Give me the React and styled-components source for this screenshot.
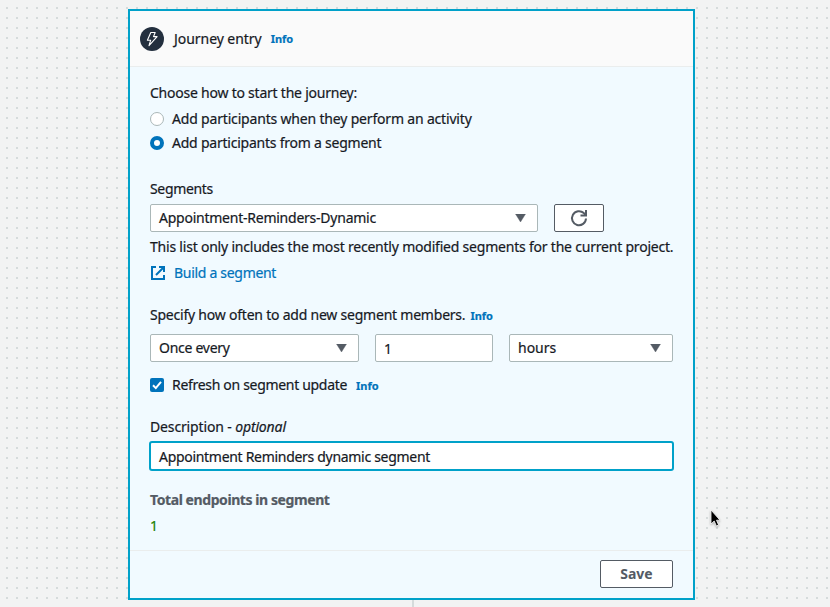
import React from "react";
import styled, { createGlobalStyle, css } from "styled-components";

const GlobalStyle = createGlobalStyle`
  :root {
    --text: #16191f;
    --sub: #545b64;
    --link: #0073bb;
    --accent: #00a1c9;
    --line: #aab7b8;
  }

  * {
    box-sizing: border-box;
  }

  body {
    margin: 0;
    overflow: hidden;
    background: #f2f3f3;
    color: var(--text);
    font-family: "Noto Sans", "Open Sans", sans-serif;
    font-size: 14px;
    line-height: 20px;
  }
`;

const Canvas = styled.div`
  position: relative;
  width: 830px;
  height: 607px;
  padding: 9px 0 0 128px;
`;

const Dots = styled.svg`
  position: absolute;
  inset: 0;
  width: 830px;
  height: 607px;
`;

const Card = styled.section`
  position: relative;
  display: flex;
  flex-direction: column;
  width: 567px;
  height: 591px;
  border: 2px solid var(--accent);
  background: #f1faff;
`;

const Connector = styled.div`
  position: relative;
  width: 2px;
  height: 7px;
  margin-left: 284px;
  background: #d5dbdb;
`;

const Header = styled.header`
  display: flex;
  align-items: center;
  height: 56px;
  padding: 0 10px;
  border-bottom: 1px solid #eaeded;
  background: #fafafa;

  svg {
    margin-right: 10px;
  }
`;

const Body = styled.div`
  flex: 1;
  padding: 16px 20px 0;
`;

const Footer = styled.footer`
  display: flex;
  justify-content: flex-end;
  height: 48px;
  padding: 9px 20px 0;
  border-top: 1px solid #eaeded;
`;

const Text = styled.span`
  white-space: nowrap;
  letter-spacing: ${({ $track }) => $track || 0}px;
  -webkit-text-stroke: 0.2px currentColor;
`;

const Line = styled.div`
  display: flex;
  align-items: center;
  height: 20px;
  margin-top: ${({ $top }) => $top || 0}px;
`;

const Info = styled.a`
  margin-left: ${({ $gap }) => $gap}px;
  padding-top: ${({ $drop }) => $drop || 0}px;
  color: var(--link);
  font-size: 11px;
  font-weight: 700;
  -webkit-text-stroke: 0.2px currentColor;
`;

const Radio = styled.span`
  width: 14px;
  height: 14px;
  margin-right: 8px;
  border: 1px solid var(--line);
  border-radius: 50%;
  background: #fff;

  ${({ $checked }) =>
    $checked &&
    css`
      border: 4px solid var(--link);
    `}
`;

const Checkbox = styled.span`
  display: flex;
  width: 14px;
  height: 14px;
  margin-right: 8px;
  border-radius: 2px;
  background: var(--link);
`;

const Fields = styled.div`
  display: flex;
  gap: 16px;
  margin-top: ${({ $top }) => $top}px;
`;

const Field = styled.div`
  display: flex;
  align-items: center;
  justify-content: space-between;
  width: ${({ $width }) => $width}px;
  height: 28px;
  padding: ${({ $drop }) => $drop || 0}px 11px 0 8px;
  border: 1px solid var(--line);
  border-radius: 2px;
  background: #fff;
`;

const FocusedField = styled(Field)`
  height: 30px;
  margin: 4px -1px 0;
  border: 2px solid var(--accent);
  border-radius: 3px;
`;

const Button = styled.button`
  display: flex;
  align-items: center;
  justify-content: center;
  width: ${({ $width }) => $width}px;
  height: 28px;
  padding: 0;
  border: 1px solid var(--sub);
  border-radius: 2px;
  background: #fff;
  color: var(--sub);
  font: inherit;
  font-weight: 700;
`;

const BuildLink = styled.a`
  display: flex;
  align-items: center;
  color: var(--link);

  svg {
    margin-right: 8px;
  }
`;

const Total = styled.div`
  margin-top: 19px;
  color: var(--sub);
  font-weight: 700;
`;

const Count = styled.div`
  margin-top: 6px;
  color: #1d8102;
`;

const Cursor = styled.svg`
  position: absolute;
  left: 708px;
  top: 508px;
  filter: drop-shadow(0 1px 1px rgba(0, 0, 0, 0.3));
`;

const BoltIcon = () => (
  <svg width="24" height="24" viewBox="0 0 24 24">
    <circle cx="12" cy="12" r="12" fill="#232f3e" />
    <path
      d="M10.8 5.5h4.4l-1.7 4.1h3.6L9 18.6l1.7-5.4H7.4z"
      fill="none"
      stroke="#fff"
      strokeWidth="1.1"
      strokeLinejoin="round"
    />
  </svg>
);

const Caret = () => (
  <svg width="11" height="8" viewBox="0 0 11 8">
    <path d="M.5 0h10L5.5 8z" fill="#545b64" stroke="#545b64" strokeWidth=".4" />
  </svg>
);

const RefreshIcon = () => (
  <svg width="18" height="18" viewBox="0 0 18 18" fill="none" stroke="#545b64" strokeWidth="2">
    <path d="M16 9.5a7 7 0 1 1-2.2-5.4L15.6 6" />
    <path d="M16 1v5.5h-5.5" />
  </svg>
);

const ExternalIcon = () => (
  <svg width="16" height="16" viewBox="0 0 16 16" fill="none" stroke="#0073bb" strokeWidth="2">
    <path d="M6 2H2v12h12v-4" />
    <path d="M9 2h5v5M14 2L6 10" />
  </svg>
);

const App = () => {
  return (
    <>
      <GlobalStyle />
      <Canvas>
        <Dots>
          <defs>
            <pattern id="dots" x="6" y="7" width="10" height="10" patternUnits="userSpaceOnUse">
              <rect width="2" height="2" fill="#d5dbdb" />
            </pattern>
          </defs>
          <rect x="6" y="7" width="824" height="593" fill="url(#dots)" />
        </Dots>

        <Card>
          <Header>
            <BoltIcon />
            <Text $track={-0.05}>Journey entry</Text>
            <Info $gap={9}>Info</Info>
          </Header>

          <Body>
            <Line>
              <Text $track={-0.23}>Choose how to start the journey:</Text>
            </Line>
            <Line $top={6}>
              <Radio />
              <Text $track={-0.18}>Add participants when they perform an activity</Text>
            </Line>
            <Line $top={4}>
              <Radio $checked />
              <Text $track={-0.23}>Add participants from a segment</Text>
            </Line>

            <Line $top={26}>
              <Text $track={-0.35}>Segments</Text>
            </Line>
            <Fields $top={5}>
              <Field $width={388}>
                <Text $track={-0.24}>Appointment-Reminders-Dynamic</Text>
                <Caret />
              </Field>
              <Button $width={50} aria-label="Refresh">
                <RefreshIcon />
              </Button>
            </Fields>
            <Line $top={5}>
              <Text $track={-0.21}>
                This list only includes the most recently modified segments for the current project.
              </Text>
            </Line>
            <Line $top={6}>
              <BuildLink>
                <ExternalIcon />
                <Text $track={-0.3}>Build a segment</Text>
              </BuildLink>
            </Line>

            <Line $top={22}>
              <Text $track={-0.22}>Specify how often to add new segment members.</Text>
              <Info $gap={5} $drop={2}>
                Info
              </Info>
            </Line>
            <Fields $top={9}>
              <Field $width={209}>
                <Text $track={-0.27}>Once every</Text>
                <Caret />
              </Field>
              <Field $width={118} $drop={2}>
                <Text>1</Text>
              </Field>
              <Field $width={164}>
                <Text>hours</Text>
                <Caret />
              </Field>
            </Fields>
            <Line $top={13}>
              <Checkbox>
                <svg width="14" height="14" viewBox="0 0 14 14">
                  <path d="M3 7.3l2.8 2.8L11 3.9" fill="none" stroke="#fff" strokeWidth="2" />
                </svg>
              </Checkbox>
              <Text $track={-0.31}>Refresh on segment update</Text>
              <Info $gap={9} $drop={2}>
                Info
              </Info>
            </Line>

            <Line $top={22}>
              <Text $track={-0.14}>
                Description - <i>optional</i>
              </Text>
            </Line>
            <FocusedField $drop={2}>
              <Text $track={-0.3}>Appointment Reminders dynamic segment</Text>
            </FocusedField>

            <Total>
              <Text $track={-0.42}>Total endpoints in segment</Text>
            </Total>
            <Count>
              <Text>1</Text>
            </Count>
          </Body>

          <Footer>
            <Button $width={73}>Save</Button>
          </Footer>
        </Card>
        <Connector />

        <Cursor width="16" height="22" viewBox="0 0 16 22">
          <path
            d="M3 2v14l3.2-3 2.2 5 2.2-1-2.1-4.8H12z"
            fill="#000"
            stroke="#fff"
            strokeWidth="0.8"
          />
        </Cursor>
      </Canvas>
    </>
  );
};

export default App;
